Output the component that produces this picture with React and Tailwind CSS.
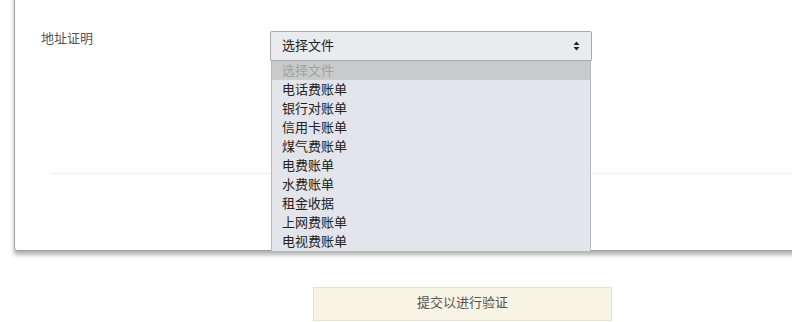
import React from "react";

const OPTIONS = [
  "选择文件",
  "电话费账单",
  "银行对账单",
  "信用卡账单",
  "煤气费账单",
  "电费账单",
  "水费账单",
  "租金收据",
  "上网费账单",
  "电视费账单",
];

export default function App() {
  return (
    <div
      className="relative h-[322px] w-[792px] overflow-hidden bg-white"
      style={{ fontFamily: '"Noto Sans CJK SC", "Noto Sans", sans-serif' }}
    >
      {/* card, top edge is above the viewport */}
      <div className="-mt-[10px] ml-[14px] h-[261px] w-[800px] rounded-bl-[3px] border border-[#9c9c9c] bg-white pt-[40px] shadow-[0_4px_4px_rgba(0,0,0,0.3)]">
        <div className="flex">
          <div className="-mt-[2px] w-[255px] pl-[26px] text-[13px] leading-[18px] text-[#555]">
            地址证明
          </div>
          <div className="relative">
            <div className="flex h-[30px] w-[322px] items-center justify-between rounded-t-[2px] border border-[#a9a9a9] bg-[#eaebee] pb-[2px] pl-[11px] pr-[11px] text-[13px] text-[#222]">
              <span>选择文件</span>
              <svg width="7" height="10" viewBox="0 0 7 10" className="mt-[1px] text-[#222]">
                <path d="M3.5 0.5 L6.5 4 H0.5 Z" fill="currentColor" />
                <path d="M3.5 9.5 L6.5 6 H0.5 Z" fill="currentColor" />
              </svg>
            </div>
            {/* open dropdown list */}
            <div className="absolute left-[1px] top-[30px] z-10 w-[320px] border-x border-[#b8bac0] bg-[#e3e5ea]">
              {OPTIONS.map((o, i) => (
                <div
                  key={o}
                  className={`h-[19px] pl-[10px] text-[13px] leading-[17px] ${
                    i === 0 ? "bg-[#c9cacc] text-[#a2a2a2]" : "text-[#222]"
                  }`}
                >
                  {o}
                </div>
              ))}
            </div>
          </div>
        </div>
        <div className="ml-[36px] mt-[112px] border-t border-[#ececec]" />
      </div>

      <div className="ml-[313px] mt-[36px] flex h-[34px] w-[299px] items-center justify-center border border-[#e7e3d3] bg-[#f7f3e5] pb-[4px] text-[13px] text-[#555]">
        提交以进行验证
      </div>
    </div>
  );
}
